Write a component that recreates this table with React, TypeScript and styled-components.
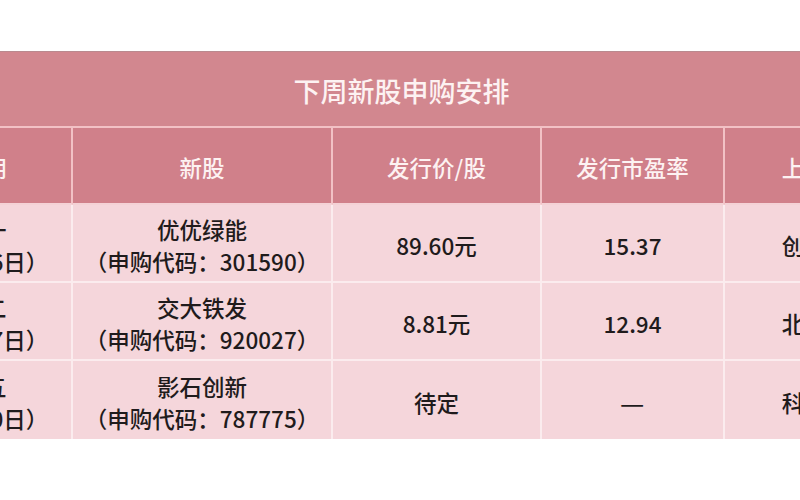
import React from "react";
import styled, { createGlobalStyle } from "styled-components";

const Global = createGlobalStyle`
  html, body { margin: 0; padding: 0; background: #ffffff; }
  body { font-family: "Noto Sans CJK SC", "Noto Sans", sans-serif; }
`;

const Page = styled.div`
  width: 800px;
  height: 500px;
  overflow: hidden;
  padding-top: 51px;
  box-sizing: border-box;
  background: #ffffff;
`;

const Table = styled.div`
  margin-left: -103px;
  width: 1009px;
  display: grid;
  grid-template-columns: 176px 260px 209px 183px 181px;
  border-top: 1px solid #b98a8f;
`;

const Title = styled.div`
  grid-column: 1 / -1;
  height: 76px;
  box-sizing: border-box;
  border-bottom: 2px solid #f2c1c5;
  background: #d2878f;
  color: #fdf2f2;
  font-size: 27px;
  font-weight: 500;
  display: flex;
  align-items: center;
  justify-content: center;
  padding-top: 2px;
`;

const HeadCell = styled.div<{ $last?: boolean }>`
  height: 77px;
  box-sizing: border-box;
  background: #d0808a;
  color: #fdf2f2;
  font-size: 22.5px;
  font-weight: 500;
  display: flex;
  align-items: center;
  justify-content: center;
  padding-top: 2px;
  border-bottom: 2px solid #f4d2d6;
  border-right: ${(p) => (p.$last ? "none" : "2px solid #f2c1c5")};
`;

const Cell = styled.div<{ $last?: boolean; $bottom?: boolean }>`
  height: 78px;
  box-sizing: border-box;
  background: #f5d6db;
  color: #1f1b1c;
  font-size: 22.5px;
  font-weight: 500;
  line-height: 32px;
  display: flex;
  flex-direction: column;
  align-items: center;
  justify-content: center;
  text-align: center;
  white-space: nowrap;
  padding-top: 3px;
  border-bottom: ${(p) => (p.$bottom ? "none" : "2px solid #fbecee")};
  border-right: ${(p) => (p.$last ? "none" : "2px solid #fbecee")};
`;

const Dash = styled.span`
  display: inline-block;
  transform: scaleX(1.2);
`;

type Row = {
  day: string;
  date: string;
  name: string;
  code: string;
  price: string;
  pe: string;
  board: string;
};

const rows: Row[] = [
  { day: "周一", date: "（5月26日）", name: "优优绿能", code: "301590", price: "89.60元", pe: "15.37", board: "创业板" },
  { day: "周二", date: "（5月27日）", name: "交大铁发", code: "920027", price: "8.81元", pe: "12.94", board: "北交所" },
  { day: "周五", date: "（5月30日）", name: "影石创新", code: "787775", price: "待定", pe: "—", board: "科创板" },
];

const headers = ["日期", "新股", "发行价/股", "发行市盈率", "上市板"];

export default function App() {
  return (
    <Page>
      <Global />
      <Table>
        <Title>下周新股申购安排</Title>
        {headers.map((h, i) => (
          <HeadCell key={h} $last={i === headers.length - 1}>
            {h}
          </HeadCell>
        ))}
        {rows.map((r, i) => {
          const bottom = i === rows.length - 1;
          return (
            <React.Fragment key={r.code}>
              <Cell $bottom={bottom}>
                <span>{r.day}</span>
                <span>{r.date}</span>
              </Cell>
              <Cell $bottom={bottom}>
                <span>{r.name}</span>
                <span>（申购代码：{r.code}）</span>
              </Cell>
              <Cell $bottom={bottom}>{r.price}</Cell>
              <Cell $bottom={bottom}>
                {r.pe === "—" ? <Dash>{r.pe}</Dash> : r.pe}
              </Cell>
              <Cell $bottom={bottom} $last>
                {r.board}
              </Cell>
            </React.Fragment>
          );
        })}
      </Table>
    </Page>
  );
}
